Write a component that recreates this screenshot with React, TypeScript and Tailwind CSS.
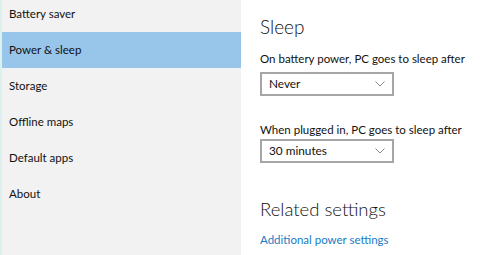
import React from "react";

const items = ["Battery saver", "Power & sleep", "Storage", "Offline maps", "Default apps", "About"];

function Chevron() {
  return (
    <svg width="10" height="6" viewBox="0 0 10 6" className="text-[#8a8a8a]">
      <path d="M0.5 0.5 L5 5 L9.5 0.5" fill="none" stroke="currentColor" strokeWidth="1" />
    </svg>
  );
}

function Select({ label }: { label: string }) {
  return (
    <div className="w-[134px] h-[24px] border-2 border-[#a6a6a6] flex items-center justify-between pl-[7px] pr-[7px] text-[11.8px] text-[#111]">
      <span>{label}</span>
      <Chevron />
    </div>
  );
}

export default function App() {
  return (
    <div className="w-[480px] h-[255px] flex overflow-hidden bg-white" style={{ fontFamily: 'Lato, "Open Sans", sans-serif' }}>
      <div className="w-[241px] h-full bg-[#f2f2f2] border-l-2 border-[#dcf0f0] flex flex-col">
        <div className="-mt-[4px]">
          {items.map((t, i) => (
            <div
              key={t}
              className={`h-[36px] flex items-center pl-[7px] text-[11.5px] text-[#111] ${i === 1 ? "bg-[#98c5ea]" : ""}`}
            >
              {t}
            </div>
          ))}
        </div>
      </div>
      <div className="flex-1 pl-[19px] flex flex-col whitespace-nowrap">
        <div className="mt-[14px] text-[19px] font-light leading-[26px] text-[#111]">Sleep</div>
        <div className="mt-[10px] text-[11.5px] leading-[18px] text-[#111]">On battery power, PC goes to sleep after</div>
        <div className="mt-[4px]">
          <Select label="Never" />
        </div>
        <div className="mt-[25px] text-[11.5px] leading-[18px] text-[#111]">When plugged in, PC goes to sleep after</div>
        <div className="mt-[0px]">
          <Select label="30 minutes" />
        </div>
        <div className="mt-[33px] text-[18.5px] font-light leading-[26px] text-[#111]">Related settings</div>
        <div className="mt-[9px] text-[11.5px] leading-[18px] text-[#1a7bc4]">Additional power settings</div>
      </div>
    </div>
  );
}
